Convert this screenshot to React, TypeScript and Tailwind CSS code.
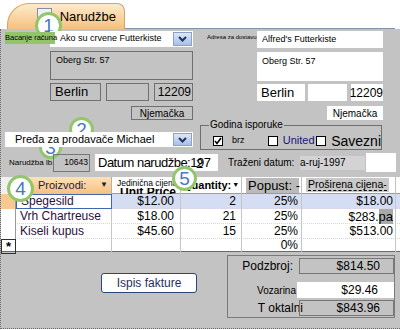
import React from "react";

interface CalloutProps {
  n: string;
  className: string;
}

const Callout = ({ n, className }: CalloutProps) => (
  <div
    className={`absolute flex items-center justify-center rounded-full border-[3px] border-[#93c66b] bg-white text-[19px] leading-none text-[#4a78c2] ${className}`}
  >
    {n}
  </div>
);

const Chevron = () => (
  <svg width="9" height="6" viewBox="0 0 9 6">
    <polyline points="1,1 4.5,4.5 8,1" fill="none" stroke="#1d3461" strokeWidth="2" />
  </svg>
);

interface ComboProps {
  text: string;
  className: string;
}

const Combo = ({ text, className }: ComboProps) => (
  <div className={`flex bg-white ${className}`}>
    <div className="flex flex-1 items-center overflow-hidden whitespace-nowrap pl-[10px]">{text}</div>
    <div className="my-[1px] mr-[1px] flex w-[19px] items-center justify-center border border-[#8aa2c8] bg-linear-to-b from-[#dde7f8] to-[#a9bfe6]">
      <Chevron />
    </div>
  </div>
);

const Check = ({ on }: { on?: boolean }) => (
  <div className="flex h-[10px] w-[10px] shrink-0 items-center justify-center border border-black bg-white">
    {on && (
      <svg width="8" height="8" viewBox="0 0 8 8">
        <polyline points="1,4 3,6.5 7,1" fill="none" stroke="black" strokeWidth="1.6" />
      </svg>
    )}
  </div>
);

const GRID = "grid grid-cols-[15px_96px_69px_61px_60px_94px]";

interface Row {
  name: string;
  price: string;
  qty: string;
  disc: string;
  total: React.ReactNode;
}

const rows: Row[] = [
  { name: "Spegesild", price: "$12.00", qty: "2", disc: "25%", total: "$18.00" },
  {
    name: "Vrh Chartreuse",
    price: "$18.00",
    qty: "21",
    disc: "25%",
    total: (
      <>
        $283.<span className="bg-[#a9a9a9] text-[13px] leading-[15px]">pa</span>
      </>
    ),
  },
  { name: "Kiseli kupus", price: "$45.60", qty: "15", disc: "25%", total: "$513.00" },
];

export default function App() {
  return (
    <div className="relative h-[330px] w-[400px] overflow-hidden bg-white font-['Liberation_Sans',Arial,sans-serif] text-black">
      {/* tab strip */}
      <div className="flex h-[29px]">
        <div className="relative ml-[7px] mt-[3px] flex h-[26px] w-[118px] items-center justify-end rounded-tl-[22px] rounded-tr-[8px] border border-b-0 border-[#d2a665] bg-linear-to-b from-[#fdebcb] to-[#f5c07e] pr-[8px] text-[13px]">
          <div className="absolute left-[29px] top-[4px] h-[10px] w-[15px] border border-[#8090a8] bg-[#eef2f8]" />
          Narudžbe
        </div>
        <div className="mr-[5px] flex-1 border-b border-[#8394a8]" />
      </div>

      {/* form body */}
      <div className="h-[300px] border-b border-l border-dotted border-[#6a6a6a] bg-[#c3c3c3]">
        <div className="flex pt-[2px]">
          {/* billing */}
          <div className="ml-[4px] flex w-[188px] flex-col">
            <div className="flex h-[16px]">
              <div className="relative z-10 mt-[1px] h-[12px] w-[50px] whitespace-nowrap bg-[#92c46c] text-[7.5px] leading-[12px]">
                Bacanje računa
              </div>
              <Combo text="Ako su crvene Futterkiste" className="relative z-[9] -ml-[5px] flex-1 text-[9px]" />
            </div>
            <div className="ml-[45px] mt-[4px] h-[29px] border border-[#6f6f6f] pl-[5px] pt-[2px] text-[9px]">
              Oberg Str. 57
            </div>
            <div className="ml-[45px] mt-[3px] flex h-[18px]">
              <div className="flex w-[51px] items-center border border-[#6f6f6f] pl-[4px] text-[13px]">Berlin</div>
              <div className="ml-[5px] w-[43px] border border-[#6f6f6f]" />
              <div className="ml-[5px] flex w-[39px] items-center justify-end border border-[#6f6f6f] pr-[1px] text-[12px]">
                12209
              </div>
            </div>
            <div className="mt-[5px] flex h-[14px] w-[62px] items-center justify-center self-end border border-[#6f6f6f] text-[10px]">
              Njemačka
            </div>
          </div>

          {/* shipping */}
          <div className="ml-[9px] flex w-[181px] flex-col">
            <div className="flex h-[17px]">
              <div className="w-[55px] whitespace-nowrap pl-[5px] pt-[2px] text-[6px]">Adresa za dostavu</div>
              <div className="flex flex-1 items-center bg-white pl-[5px] text-[9px]">Alfred's Futterkiste</div>
            </div>
            <div className="ml-[55px] mt-[4px] h-[29px] bg-white pl-[5px] pt-[3px] text-[9px]">Oberg Str. 57</div>
            <div className="ml-[55px] mt-[3px] flex h-[17px]">
              <div className="flex w-[48px] items-center bg-white pl-[4px] text-[13px]">Berlin</div>
              <div className="ml-[3px] w-[39px] bg-white" />
              <div className="ml-[4px] flex w-[32px] items-center justify-end bg-white text-[12px]">12209</div>
            </div>
            <div className="mt-[5px] flex h-[14px] w-[56px] items-center justify-center self-end bg-white text-[10px]">
              Njemačka
            </div>
          </div>
        </div>

        {/* salesperson + ship via */}
        <div className="mt-[2px] flex h-[28px]">
          <div className="ml-[4px] w-[188px] pt-[10px]">
            <Combo text="Pređa za prodavače Michael" className="relative z-10 h-[15px] pl-0 text-[11px]" />
          </div>
          <div className="relative ml-[7px] mt-[3px] h-[25px] w-[182px] border border-[#6e6e6e]">
            <span className="absolute -top-[7px] left-[8px] bg-[#c3c3c3] px-[1px] text-[10px] leading-[12px]">
              Godina isporuke
            </span>
            <div className="flex h-full items-center pl-[12px] pt-[6px]">
              <div className="flex w-[61px] items-center">
                <Check on />
                <span className="ml-[9px] text-[9px]">brz</span>
              </div>
              <div className="flex w-[54px] items-center">
                <Check />
                <span className="ml-[5px] text-[11px] text-[#14147a]">United</span>
              </div>
              <div className="flex items-center">
                <Check />
                <span className="ml-[5px] text-[14px] leading-[14px]">Savezni</span>
              </div>
            </div>
          </div>
        </div>

        {/* order number + dates */}
        <div className="relative z-10 mt-[3px] flex h-[19px] items-center">
          <span className="ml-[8px] w-[44px] whitespace-nowrap text-[8px]">Narudžba lb.</span>
          <div className="flex h-[18px] w-[37px] items-center justify-end border border-[#777] pr-[1px] text-[8.5px]">
            10643
          </div>
          <div className="ml-[5px] h-[17px] w-[123px] overflow-hidden whitespace-nowrap bg-white pl-[3px] text-[13px] leading-[17px] tracking-[-0.5px]">
            Datum narudžbe:1
            <span className="relative">
              9<span className="absolute left-[-1px] top-0">2</span>
            </span>
            7
          </div>
          <span className="ml-[10px] w-[72px] whitespace-nowrap text-[10px]">Traženi datum:</span>
          <div className="flex h-[14px] w-[65px] items-center bg-[#d4d2d4] text-[10px]">a-ruj-1997</div>
          <div className="ml-[1px] h-[19px] w-[30px] bg-white" />
        </div>

        {/* order lines */}
        <div className="mt-[5px]">
          <div className={`${GRID} h-[17px] border-b border-[#9c9c9c] bg-white`}>
            <div className="border-r border-[#9c9c9c] bg-[#f0f0f0]" />
            <div className="flex items-center border-r border-[#b0b0b0] bg-linear-to-b from-[#fde2b8] to-[#f7bf80] pl-[22px] pr-[3px] text-[11px] text-[#1a1a40]">
              Proizvodi:
              <span className="ml-auto text-[8px]">▼</span>
            </div>
            <div className="relative overflow-hidden border-r border-[#c0c0c0]">
              <span className="absolute left-[8px] top-[8px] whitespace-nowrap text-[12px] font-bold leading-[14px]">
                Unit Price
              </span>
              <span className="absolute left-[5px] top-[2px] z-[1] whitespace-nowrap bg-white pr-[1px] text-[8.5px] leading-[9px]">
                Jedinična cijena
              </span>
            </div>
            <div className="flex items-center overflow-hidden border-r border-[#c0c0c0] pl-[2px] text-[11px] font-bold">
              Quantity:<span className="ml-[1px] text-[7px] font-normal">▼</span>
            </div>
            <div className="flex items-center border-r border-[#c0c0c0] pl-[4px]">
              <div className="flex h-[15px] w-[53px] items-center whitespace-nowrap bg-[#bababa] pl-[2px] text-[13px]">
                Popust: -
              </div>
            </div>
            <div className="flex items-center border-r border-[#c0c0c0] pl-[4px]">
              <div className="h-[14px] w-[83px] whitespace-nowrap bg-[#c9c9c9] pl-[2px] text-[10.5px] leading-[12px]">
                <span className="border-b border-dashed border-black">Proširena cijena-</span>
              </div>
            </div>
          </div>

          {rows.map((r, i) => (
            <div
              key={r.name}
              className={`${GRID} h-[15px] border-b border-dotted border-[#e2cfe2] text-[12px] leading-[15px] ${
                i === 0 ? "bg-[#d4ddf1]" : "bg-white"
              }`}
            >
              <div className={`border-r border-[#9a9a9a] ${i === 0 ? "bg-[#f8c98e]" : "bg-white"}`} />
              <div
                className={`overflow-hidden whitespace-nowrap pl-[4px] text-[#2a1040] ${
                  i === 0 ? "border border-[#3f67b1] bg-white leading-[13px]" : "border-r border-[#c6c6c6]"
                }`}
              >
                {r.name}
              </div>
              <div className="border-r border-[#c6c6c6] pr-[6px] text-right">{r.price}</div>
              <div className="border-r border-[#c6c6c6] pr-[5px] text-right">{r.qty}</div>
              <div className="border-r border-[#c6c6c6] pr-[3px] text-right">{r.disc}</div>
              <div className="whitespace-nowrap border-r border-[#c6c6c6] pr-[2px] text-right">{r.total}</div>
            </div>
          ))}

          <div className={`${GRID} h-[13px] border-b border-[#6a6a6a] bg-white text-[12px] leading-[13px]`}>
            <div className="border border-[#303030] text-center text-[13px] font-bold">*</div>
            <div className="border-r border-[#c6c6c6]" />
            <div className="border-r border-[#c6c6c6]" />
            <div className="border-r border-[#c6c6c6]" />
            <div className="border-r border-[#c6c6c6] pr-[3px] text-right">0%</div>
            <div className="border-r border-[#c6c6c6]" />
          </div>
        </div>

        {/* footer */}
        <div className="mt-[3px] flex">
          <button className="ml-[100px] mt-[18px] h-[20px] w-[96px] rounded-[3px] border border-[#2a4674] bg-white text-[12px] text-[#1f2f5a]">
            Ispis fakture
          </button>
          <div className="ml-[30px] h-[63px] w-[168px] border border-[#7a7a7a]">
            <div className="mt-[2px] flex h-[16px] items-center">
              <span className="flex-1 pr-[6px] text-right text-[12px]">Podzbroj:</span>
              <div className="flex h-full w-[95px] items-center justify-end border border-[#777] pr-[13px] text-[12px]">
                $814.50
              </div>
            </div>
            <div className="mt-[8px] flex h-[16px] items-center">
              <span className="flex-1 pr-[1px] text-right text-[10px]">Vozarina</span>
              <div className="flex h-full w-[97px] items-center justify-end bg-white pr-[16px] text-[12px]">$29.46</div>
            </div>
            <div className="mt-[2px] flex h-[16px] items-center">
              <span className="-mr-[4px] flex-1 whitespace-nowrap text-right text-[12px]">T oktalni</span>
              <div className="flex h-full w-[95px] items-center justify-end border border-[#777] pr-[13px] text-[12px]">
                $843.96
              </div>
            </div>
          </div>
        </div>
      </div>

      <Callout n="1" className="left-[35px] top-[12px] z-[5] h-[27px] w-[27px]" />
      <Callout n="2" className="left-[69px] top-[117px] z-[5] h-[25px] w-[25px]" />
      <Callout n="3" className="left-[39px] top-[136px] z-[5] h-[23px] w-[23px]" />
      <Callout n="4" className="left-[7px] top-[175px] z-20 h-[27px] w-[27px]" />
      <Callout n="5" className="left-[172px] top-[166px] z-20 h-[25px] w-[25px]" />
    </div>
  );
}
